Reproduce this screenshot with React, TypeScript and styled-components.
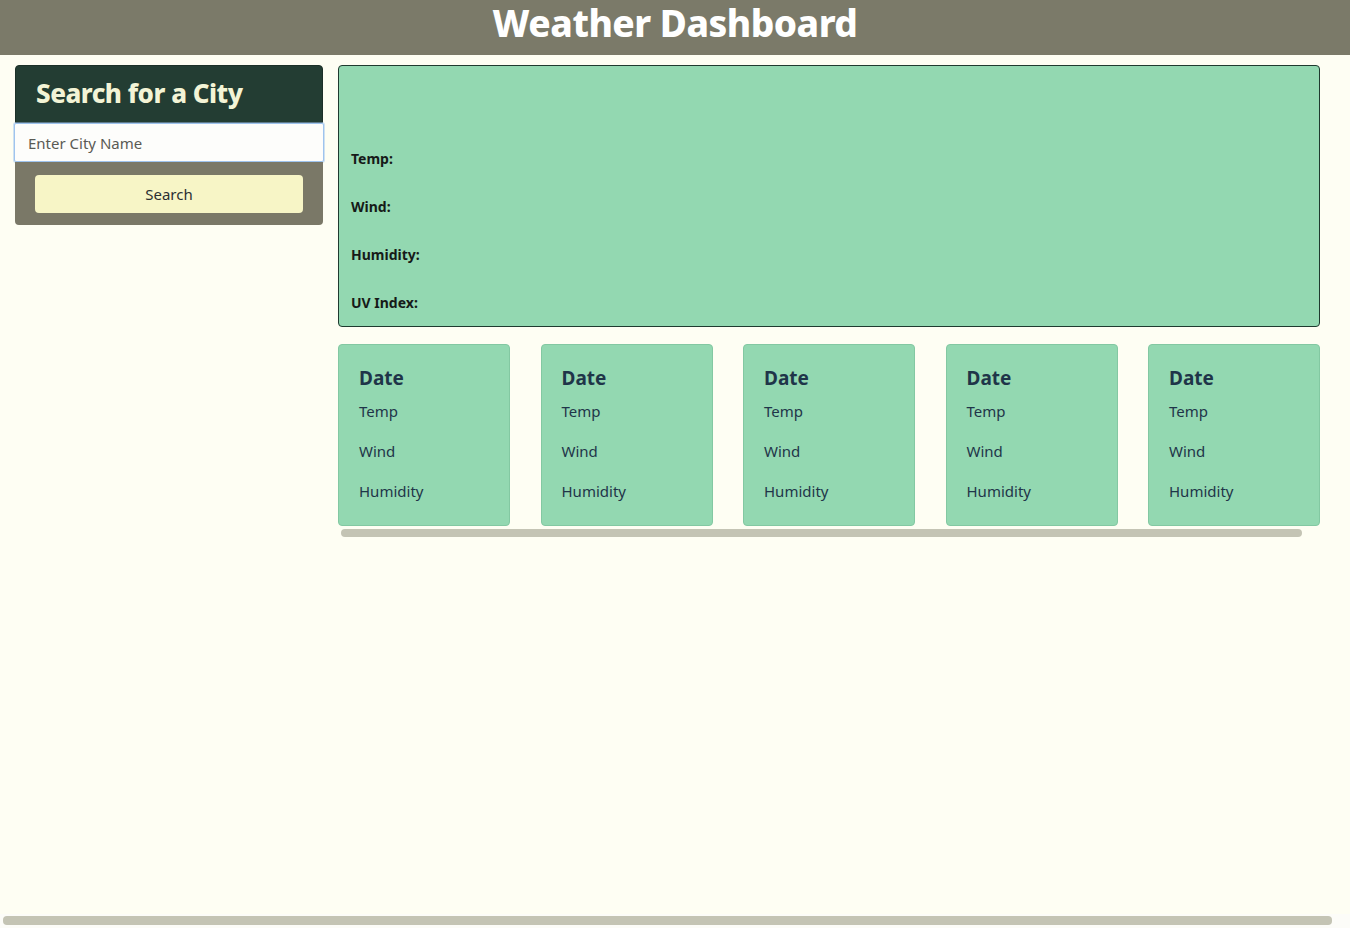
import React from "react";
import styled, { createGlobalStyle } from "styled-components";

const GlobalStyle = createGlobalStyle`
  html, body {
    margin: 0;
    padding: 0;
    background: #fefef3;
    font-family: "Noto Sans", "Open Sans", sans-serif;
  }
  * { box-sizing: border-box; }
`;

const Header = styled.header`
  height: 55px;
  background: #7b7a69;
  display: flex;
  align-items: flex-start;
  justify-content: center;
  padding-top: 2px;
`;

const HeaderTitle = styled.h1`
  margin: 0;
  color: #ffffff;
  font-size: 37px;
  font-weight: 800;
  letter-spacing: -0.5px;
  line-height: 42px;
`;

const Layout = styled.div`
  display: flex;
  align-items: flex-start;
  gap: 15px;
  padding: 10px 30px 0 15px;
`;

const Sidebar = styled.aside`
  width: 308px;
  flex: 0 0 308px;
  display: flex;
  flex-direction: column;
`;

const SidebarTitle = styled.h2`
  margin: 0;
  height: 58px;
  background: #233d33;
  border: 1px solid #1c3028;
  border-radius: 4px 4px 0 0;
  color: #f3f4d6;
  font-size: 26px;
  font-weight: 800;
  letter-spacing: -0.5px;
  display: flex;
  align-items: center;
  padding: 0 0 3px 20px;
`;

const CityInput = styled.input`
  margin: 0 -1px;
  width: 310px;
  height: 39px;
  border: 1px solid #9fc4ee;
  border-radius: 2px;
  box-shadow: 0 0 0 1px rgba(159, 196, 238, 0.5);
  background: #fdfdfb;
  padding: 0 13px;
  font-family: "Noto Sans", sans-serif;
  font-size: 15px;
  color: #333;
  outline: none;
  &::placeholder {
    color: #5a5a55;
  }
`;

const SearchArea = styled.div`
  background: #7a7867;
  border-radius: 0 0 4px 4px;
  padding: 13px 20px 12px;
`;

const SearchButton = styled.button`
  width: 100%;
  height: 38px;
  border: none;
  border-radius: 4px;
  background: #f7f5c6;
  color: #2b2f33;
  font-family: "Noto Sans", sans-serif;
  font-size: 15px;
  padding-bottom: 2px;
  cursor: pointer;
`;

const Main = styled.main`
  width: 982px;
  flex: 0 0 982px;
  display: flex;
  flex-direction: column;
  gap: 17px;
`;

const CurrentCard = styled.section`
  height: 262px;
  background: #93d8b1;
  border: 1px solid #1f3a2f;
  border-radius: 4px;
  padding: 0 12px;
  display: flex;
  flex-direction: column;
`;

const CityName = styled.h2`
  margin: 0;
  min-height: 81px;
`;

const StatLabel = styled.p`
  margin: 0 0 24px;
  line-height: 24px;
  font-size: 14px;
  font-weight: 700;
  color: #161a18;
`;

const ForecastSection = styled.div`
  display: flex;
  flex-direction: column;
`;

const ForecastRow = styled.div`
  display: flex;
  justify-content: space-between;
`;

const ForecastCard = styled.article`
  flex: 0 0 172px;
  height: 182px;
  background: #93d8b1;
  border: 1px solid #83c8a2;
  border-radius: 4px;
  padding: 20px 20px 0;
  color: #1f3549;
`;

const ForecastDate = styled.h3`
  margin: 0 0 8px;
  font-size: 19px;
  font-weight: 700;
  line-height: 26px;
`;

const ForecastLine = styled.p`
  margin: 0 0 16px;
  font-size: 15px;
  line-height: 24px;
`;

const ScrollTrack = styled.div`
  height: 14px;
  padding: 3px 18px 3px 3px;
  display: flex;
`;

const ScrollThumb = styled.div`
  flex: 1;
  background: #c4c4b4;
  border-radius: 4px;
`;

const PageScrollbar = styled.div`
  position: fixed;
  left: 0;
  right: 0;
  bottom: 0;
  height: 14px;
  padding: 2px 18px 3px 3px;
  display: flex;
  background: rgba(250, 250, 252, 0.6);
`;

const days = [0, 1, 2, 3, 4];

export default function App() {
  return (
    <>
      <GlobalStyle />
      <Header>
        <HeaderTitle>Weather Dashboard</HeaderTitle>
      </Header>
      <Layout>
        <Sidebar>
          <SidebarTitle>Search for a City</SidebarTitle>
          <CityInput placeholder="Enter City Name" />
          <SearchArea>
            <SearchButton>Search</SearchButton>
          </SearchArea>
        </Sidebar>
        <Main>
          <CurrentCard>
            <CityName />
            <StatLabel>Temp:</StatLabel>
            <StatLabel>Wind:</StatLabel>
            <StatLabel>Humidity:</StatLabel>
            <StatLabel>UV Index:</StatLabel>
          </CurrentCard>
          <ForecastSection>
            <ForecastRow>
              {days.map((d) => (
                <ForecastCard key={d}>
                  <ForecastDate>Date</ForecastDate>
                  <ForecastLine>Temp</ForecastLine>
                  <ForecastLine>Wind</ForecastLine>
                  <ForecastLine>Humidity</ForecastLine>
                </ForecastCard>
              ))}
            </ForecastRow>
            <ScrollTrack>
              <ScrollThumb />
            </ScrollTrack>
          </ForecastSection>
        </Main>
      </Layout>
      <PageScrollbar>
        <ScrollThumb />
      </PageScrollbar>
    </>
  );
}
